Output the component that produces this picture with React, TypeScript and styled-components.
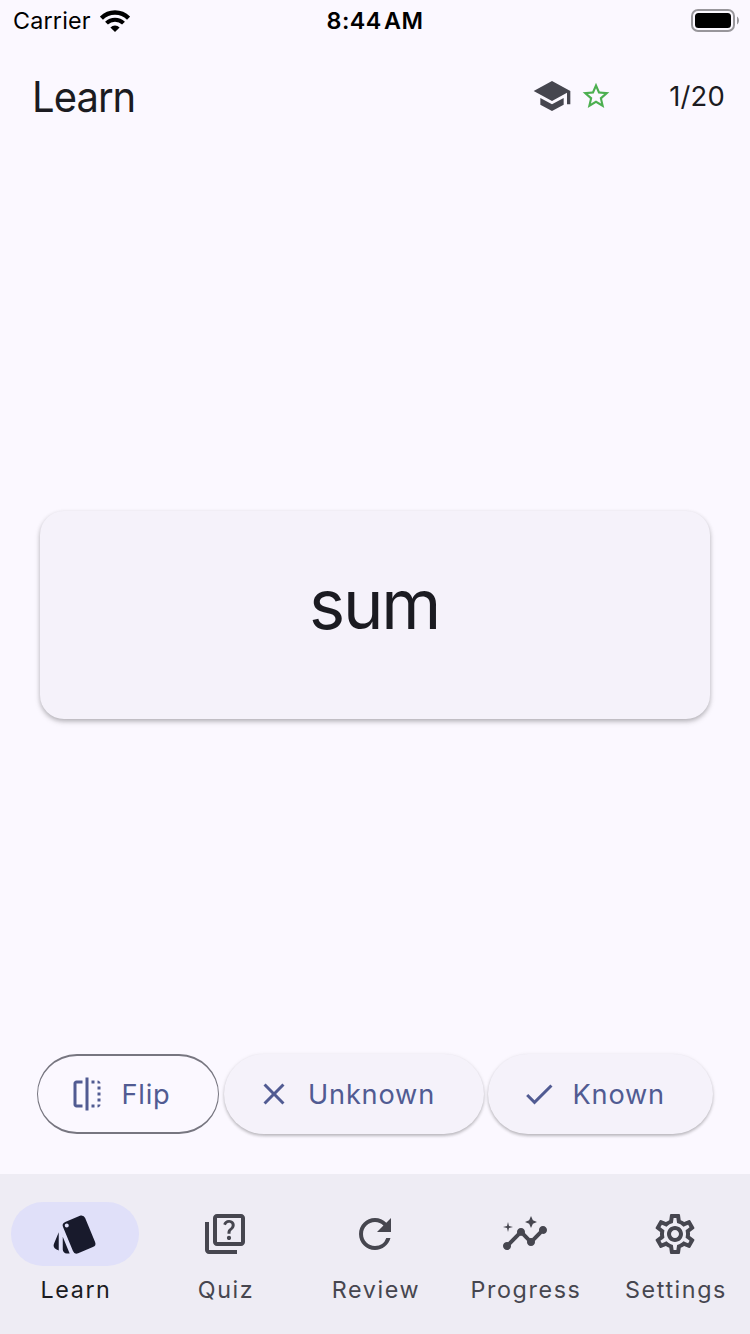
import React from 'react';
import styled, { createGlobalStyle } from 'styled-components';
import type { IconType } from 'react-icons';
import {
  MdCheck,
  MdClose,
  MdFlip,
  MdInsights,
  MdOutlineQuiz,
  MdOutlineSettings,
  MdRefresh,
  MdSchool,
  MdStarBorder,
  MdStyle,
} from 'react-icons/md';

const GlobalStyle = createGlobalStyle`
  * { box-sizing: border-box; }
  body {
    margin: 0;
    background: #fbf8ff;
    font-family: Inter, 'Liberation Sans', sans-serif;
    color: #1b1b21;
  }
  svg { display: block; flex: none; }
`;

const Screen = styled.div`
  width: 750px;
  height: 1334px;
  display: flex;
  flex-direction: column;
  overflow: hidden;
`;

const StatusBar = styled.header`
  height: 40px;
  padding: 0 11px 0 13px;
  display: grid;
  grid-template-columns: 1fr auto 1fr;
  align-items: center;
  color: #000;
  font-size: 23.3px;
  line-height: 40px;
`;

const Carrier = styled.div`
  display: flex;
  align-items: center;
  gap: 9px;
  letter-spacing: 0.2px;
`;

const StatusText = styled.span`
  padding-top: 1px;
  line-height: 40px;
`;

const Clock = styled.div`
  padding: 1px 2px 0 0;
  font-weight: 600;
  letter-spacing: 0.45px;
  word-spacing: -4px;
`;

const BatterySlot = styled.div`
  display: flex;
  justify-content: flex-end;
  padding-bottom: 1px;
`;

const AppBar = styled.div`
  height: 112px;
  padding: 0 25px 0 32px;
  display: flex;
  align-items: center;
`;

const Title = styled.h1`
  margin: 0;
  padding-top: 1px;
  flex: 1;
  font-size: 42.5px;
  font-weight: 400;
  letter-spacing: -1px;
  transform: scaleX(0.94);
  transform-origin: left;
`;

const Badges = styled.div`
  display: flex;
  align-items: center;
  gap: 8px;
  color: #46464f;
`;

const Counter = styled.div`
  width: 113px;
  text-align: right;
  font-size: 27.4px;
  letter-spacing: 0.2px;
`;

const Deck = styled.main`
  flex: 1;
  padding: 359px 40px 0;
`;

const FlashCard = styled.div`
  height: 208px;
  padding: 0 2px 22px 0;
  border-radius: 24px;
  background: #f5f2fa;
  box-shadow: 0 2px 4px rgba(0, 0, 0, 0.2), 0 3px 6px rgba(0, 0, 0, 0.12);
  display: flex;
  align-items: center;
  justify-content: center;
  font-size: 68.5px;
  letter-spacing: -2.2px;
`;

const Actions = styled.div`
  height: 120px;
  padding: 0 37px;
  display: flex;
  align-items: flex-start;
  justify-content: space-between;
`;

const ActionButton = styled.button<{ $outlined?: boolean; $width: number }>`
  width: ${(p) => p.$width}px;
  height: 80px;
  padding: 0 0 0 ${(p) => (p.$outlined ? 31 : 32.5)}px;
  display: flex;
  align-items: center;
  gap: ${(p) => (p.$outlined ? 16.5 : 16)}px;
  border: ${(p) => (p.$outlined ? 'solid #777680' : 'none')};
  border-width: ${(p) => (p.$outlined ? '2px 1px' : '0')};
  border-radius: 40px;
  background: ${(p) => (p.$outlined ? 'transparent' : '#f5f2fa')};
  box-shadow: ${(p) =>
    p.$outlined ? 'none' : '0 2px 3px rgba(0, 0, 0, 0.2), 0 1px 4px rgba(0, 0, 0, 0.1)'};
  color: #515b92;
  font: 430 27.2px Inter, 'Liberation Sans', sans-serif;
  letter-spacing: 0.8px;
  white-space: nowrap;
`;

const NavBar = styled.nav`
  height: 160px;
  background: #eeecf4;
  display: grid;
  grid-template-columns: repeat(5, 1fr);
`;

const NavItem = styled.div<{ $active?: boolean }>`
  padding-top: 28px;
  display: flex;
  flex-direction: column;
  align-items: center;
  color: ${(p) => (p.$active ? '#1b1b21' : '#46464f')};
`;

const Indicator = styled.div<{ $active?: boolean }>`
  width: 128px;
  height: 64px;
  border-radius: 32px;
  display: flex;
  align-items: center;
  justify-content: center;
  background: ${(p) => (p.$active ? '#e0e0f9' : 'transparent')};
  color: ${(p) => (p.$active ? '#181a2c' : 'inherit')};
`;

const NavLabel = styled.span`
  margin-top: 8px;
  padding-left: 2px;
  font-size: 23.3px;
  font-weight: 430;
  line-height: 32px;
  letter-spacing: 1.6px;
  white-space: nowrap;
`;

const WifiIcon = () => (
  <svg width="30" height="22" viewBox="0 0 30 22" fill="none" stroke="#000">
    <path d="M1.4 8.1a19.2 19.2 0 0 1 27.2 0" strokeWidth="4.4" />
    <path d="M6.5 13.2a12 12 0 0 1 17 0" strokeWidth="4" />
    <path d="M15 22l-4.6-4.6a6.5 6.5 0 0 1 9.2 0z" fill="#000" stroke="none" />
  </svg>
);

const BatteryIcon = () => (
  <svg width="48" height="23" viewBox="0 0 48 23">
    <rect x="1" y="1" width="42" height="21" rx="6" fill="none" stroke="#98969b" strokeWidth="2" />
    <rect x="4" y="4" width="36" height="15" rx="3.5" fill="#000" />
    <path d="M46 7.5c2.6 1.6 2.6 6.400 0 8z" fill="#98969b" />
  </svg>
);

const tabs: { label: string; icon: IconType }[] = [
  { label: 'Learn', icon: MdStyle },
  { label: 'Quiz', icon: MdOutlineQuiz },
  { label: 'Review', icon: MdRefresh },
  { label: 'Progress', icon: MdInsights },
  { label: 'Settings', icon: MdOutlineSettings },
];

export default function App() {
  return (
    <Screen>
      <GlobalStyle />
      <StatusBar>
        <Carrier>
          <StatusText>Carrier</StatusText>
          <WifiIcon />
        </Carrier>
        <Clock>8:44 AM</Clock>
        <BatterySlot>
          <BatteryIcon />
        </BatterySlot>
      </StatusBar>
      <AppBar>
        <Title>Learn</Title>
        <Badges>
          <MdSchool size={40} />
          <MdStarBorder size={32} color="#4caf50" />
        </Badges>
        <Counter>1/20</Counter>
      </AppBar>
      <Deck>
        <FlashCard>sum</FlashCard>
      </Deck>
      <Actions>
        <ActionButton $outlined $width={182}>
          <MdFlip size={36} />
          Flip
        </ActionButton>
        <ActionButton $width={260}>
          <MdClose size={36} />
          Unknown
        </ActionButton>
        <ActionButton $width={225}>
          <MdCheck size={36} />
          Known
        </ActionButton>
      </Actions>
      <NavBar>
        {tabs.map(({ label, icon: Icon }, i) => (
          <NavItem key={label} $active={i === 0}>
            <Indicator $active={i === 0}>
              <Icon size={48} />
            </Indicator>
            <NavLabel>{label}</NavLabel>
          </NavItem>
        ))}
      </NavBar>
    </Screen>
  );
}
